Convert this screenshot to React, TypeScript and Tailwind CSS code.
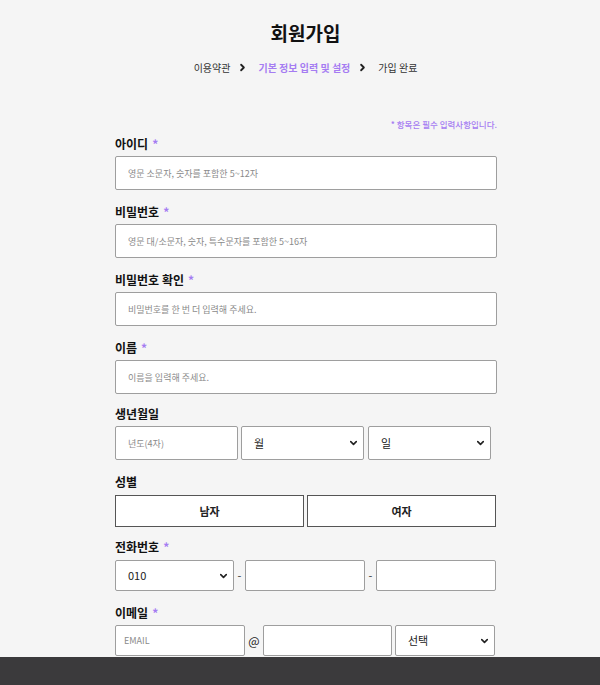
import { ChevronDown, ChevronRight } from "lucide-react";

const font = { fontFamily: '"Noto Sans CJK KR", "Noto Sans", sans-serif' };

function Label({ text, req = true }: { text: string; req?: boolean }) {
  return (
    <div className="flex h-[16px] items-center text-[12px] font-bold leading-none text-[#111]">
      {text}
      {req && <span className="ml-1 text-[#a57cf2]">*</span>}
    </div>
  );
}

function Field({ placeholder }: { placeholder: string }) {
  return (
    <input
      className="h-[34px] w-full rounded-[2px] border border-[#9e9e9e] bg-white px-[12px] text-[9px] text-[#333] outline-none placeholder:text-[#8a8a8a]"
      placeholder={placeholder}
    />
  );
}

function Select({ value, w, h }: { value: string; w: string; h: string }) {
  return (
    <div className={`relative ${w} ${h}`}>
      <select
        defaultValue={value}
        className="h-full w-full appearance-none rounded-[2px] border border-[#9e9e9e] bg-white pl-[12px] text-[11px] text-[#222] outline-none"
      >
        <option>{value}</option>
      </select>
      <ChevronDown
        size={11}
        strokeWidth={3.5}
        className="pointer-events-none absolute right-[5px] top-1/2 -translate-y-1/2 text-[#222]"
      />
    </div>
  );
}

export default function App() {
  return (
    <div style={font} className="flex h-[685px] w-full flex-col overflow-hidden bg-[#f5f5f5]">
      <div className="h-[657px] overflow-hidden">
        <div className="pl-[11px]">
          <h1 className="pt-[20px] text-center text-[19px] font-bold leading-[26px] text-[#111]">회원가입</h1>

          <div className="mt-[16px] flex items-center justify-center text-[10px] leading-none text-[#333]">
            <span>이용약관</span>
            <ChevronRight size={11} strokeWidth={4} className="ml-[7px] mr-[10px] text-[#222]" />
            <span className="font-bold text-[#a57cf2]">기본 정보 입력 및 설정</span>
            <ChevronRight size={11} strokeWidth={4} className="ml-[7px] mr-[10px] text-[#222]" />
            <span>가입 완료</span>
          </div>
        </div>

        <div className="w-[382px]" style={{ marginLeft: 115 }}>
          <p className="mt-[45px] text-right text-[8.5px] font-medium leading-[12px] text-[#a57cf2]">
            * 항목은 필수 입력사항입니다.
          </p>

          <div className="mt-[6px] flex flex-col gap-[4px]">
            <Label text="아이디" />
            <Field placeholder="영문 소문자, 숫자를 포함한 5~12자" />
          </div>
          <div className="mt-[14px] flex flex-col gap-[4px]">
            <Label text="비밀번호" />
            <Field placeholder="영문 대/소문자, 숫자, 특수문자를 포함한 5~16자" />
          </div>
          <div className="mt-[14px] flex flex-col gap-[4px]">
            <Label text="비밀번호 확인" />
            <Field placeholder="비밀번호를 한 번 더 입력해 주세요." />
          </div>
          <div className="mt-[14px] flex flex-col gap-[4px]">
            <Label text="이름" />
            <Field placeholder="이름을 입력해 주세요." />
          </div>

          <div className="mt-[12px] flex flex-col gap-[4px]">
            <Label text="생년월일" req={false} />
            <div className="flex gap-[3px]">
              <input
                className="h-[34px] w-[123px] rounded-[2px] border border-[#9e9e9e] bg-white px-[12px] text-[9px] outline-none placeholder:text-[#8a8a8a]"
                placeholder="년도(4자)"
              />
              <Select value="월" w="w-[123px]" h="h-[34px]" />
              <div className="ml-[1px]">
                <Select value="일" w="w-[123px]" h="h-[34px]" />
              </div>
            </div>
          </div>

          <div className="mt-[14px] flex flex-col gap-[5px]">
            <Label text="성별" req={false} />
            <div className="flex gap-[3px] pr-[1px]">
              <button className="h-[32px] flex-1 border border-[#555] bg-white text-[11px] font-bold text-[#222]">
                남자
              </button>
              <button className="h-[32px] flex-1 border border-[#555] bg-white text-[11px] font-bold text-[#222]">
                여자
              </button>
            </div>
          </div>

          <div className="mt-[12px] flex flex-col gap-[5px]">
            <Label text="전화번호" />
            <div className="flex items-center">
              <Select value="010" w="w-[119px]" h="h-[31px]" />
              <span className="w-[11px] text-center text-[11px] text-[#333]">-</span>
              <input className="h-[31px] w-[120px] rounded-[2px] border border-[#9e9e9e] bg-white outline-none" />
              <span className="w-[11px] text-center text-[11px] text-[#333]">-</span>
              <input className="h-[31px] w-[120px] rounded-[2px] border border-[#9e9e9e] bg-white outline-none" />
            </div>
          </div>

          <div className="mt-[14px] flex flex-col gap-[4px]">
            <Label text="이메일" />
            <div className="flex items-center">
              <input
                className="h-[31px] w-[130px] rounded-[2px] border border-[#9e9e9e] bg-white px-[8px] text-[9px] outline-none placeholder:text-[#8a8a8a]"
                placeholder="EMAIL"
              />
              <span className="w-[18px] text-center text-[12px] text-[#222]">@</span>
              <input className="h-[31px] w-[129px] rounded-[2px] border border-[#9e9e9e] bg-white outline-none" />
              <div className="ml-[3px]">
                <Select value="선택" w="w-[100px]" h="h-[31px]" />
              </div>
            </div>
          </div>
        </div>
      </div>
      <div className="h-[28px] bg-[#3b3a3c]" />
    </div>
  );
}
